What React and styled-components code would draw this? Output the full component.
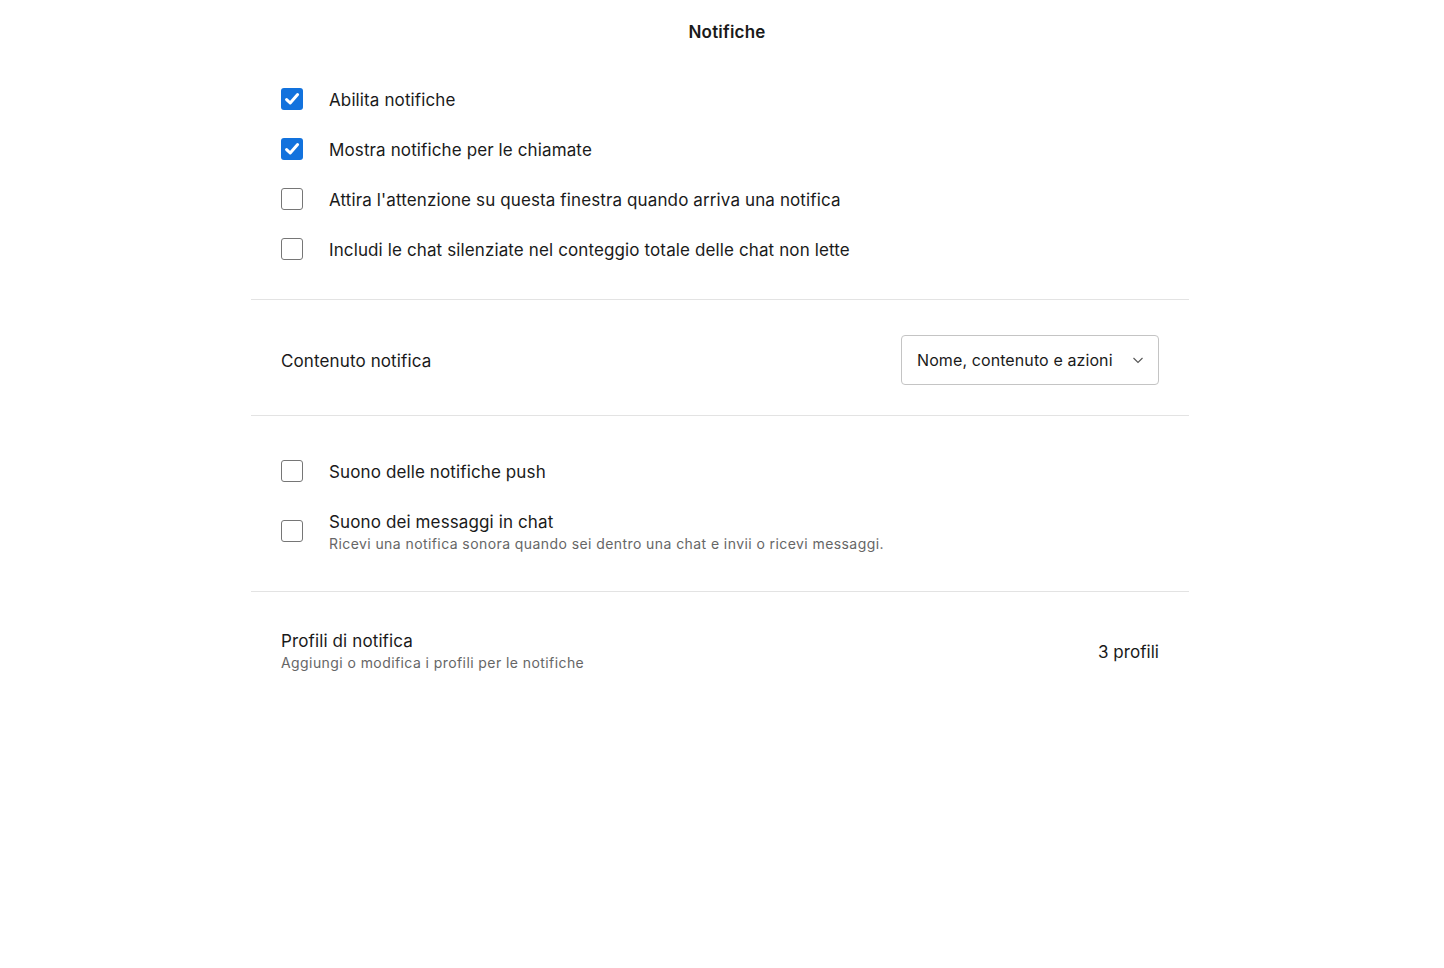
import React from "react";
import styled, { createGlobalStyle } from "styled-components";

const GlobalStyle = createGlobalStyle`
  body {
    margin: 0;
    background: #ffffff;
    font-family: Inter, "Noto Sans", sans-serif;
    color: #1a1a1a;
  }
`;

const Page = styled.div`
  width: 938px;
  margin-left: 251px;
`;

const Header = styled.header`
  height: 49px;
  padding-top: 21px;
  box-sizing: border-box;
  text-align: center;
  margin-left: 10px;
  font-size: 17px;
  font-weight: 600;
  letter-spacing: 0.2px;
  line-height: 22px;
`;

const Section = styled.section`
  padding: ${({ $pad }) => $pad || "25px 30px"};
  border-bottom: ${({ $last }) => ($last ? "none" : "1px solid #e3e3e3")};
`;

const CheckRow = styled.label`
  display: flex;
  align-items: center;
  gap: 26px;
  min-height: ${({ $tall }) => ($tall ? "70px" : "50px")};
  cursor: pointer;
`;

const Box = styled.span`
  flex: none;
  width: 22px;
  height: 22px;
  box-sizing: border-box;
  border-radius: 3px;
  border: ${({ $checked }) => ($checked ? "none" : "1.5px solid #767676")};
  background: ${({ $checked }) => ($checked ? "#1272dd" : "#fff")};
  display: flex;
  align-items: center;
  justify-content: center;
`;

const Texts = styled.div`
  display: flex;
  flex-direction: column;
  gap: 1px;
  padding-top: ${({ $nudge }) => ($nudge ? "2px" : "0")};
`;

const Label = styled.span`
  font-size: 17px;
  line-height: 22px;
  letter-spacing: 0.12px;
  padding-top: ${({ $nudge }) => ($nudge ? "2px" : "0")};
`;

const Sub = styled.span`
  font-size: 14px;
  line-height: 20px;
  letter-spacing: 0.42px;
  color: #666;
`;

const SettingRow = styled.div`
  display: flex;
  align-items: center;
  justify-content: space-between;
  min-height: ${({ $h }) => $h || "50px"};
`;

const Select = styled.button`
  width: 258px;
  height: 50px;
  box-sizing: border-box;
  border: 1px solid #c4c4c4;
  border-radius: 4px;
  background: #fff;
  display: flex;
  align-items: center;
  justify-content: space-between;
  padding: 0 14px 0 15px;
  font-family: inherit;
  font-size: 16px;
  letter-spacing: 0.1px;
  color: #1a1a1a;
`;

const Value = styled.span`
  font-size: 17px;
  line-height: 22px;
  letter-spacing: 0.05px;
  padding-top: 2px;
`;

const Check = ({ checked }) => (
  <Box $checked={checked}>
    {checked && (
      <svg width="18" height="18" viewBox="0 0 18 18" fill="none">
        <path
          d="M3.6 9.6l3.6 3.4L14.6 4.6"
          stroke="#fff"
          strokeWidth="3"
          strokeLinecap="round"
          strokeLinejoin="round"
        />
      </svg>
    )}
  </Box>
);

const Chevron = () => (
  <svg width="12" height="12" viewBox="0 0 12 12" fill="none">
    <path d="M1.5 4l4.5 4.5L10.5 4" stroke="#555" strokeWidth="1.1" />
  </svg>
);

const general = [
  { text: "Abilita notifiche", checked: true },
  { text: "Mostra notifiche per le chiamate", checked: true },
  { text: "Attira l'attenzione su questa finestra quando arriva una notifica", checked: false },
  { text: "Includi le chat silenziate nel conteggio totale delle chat non lette", checked: false },
];

const App = () => {
  return (
    <>
      <GlobalStyle />
      <Header>Notifiche</Header>
      <Page>
        <Section>
          {general.map((item) => (
            <CheckRow key={item.text}>
              <Check checked={item.checked} />
              <Label $nudge>{item.text}</Label>
            </CheckRow>
          ))}
        </Section>
        <Section $pad="35px 30px 30px">
          <SettingRow>
            <Label $nudge>Contenuto notifica</Label>
            <Select>
              Nome, contenuto e azioni
              <Chevron />
            </Select>
          </SettingRow>
        </Section>
        <Section $pad="30px 30px 25px">
          <CheckRow>
            <Check checked={false} />
            <Label $nudge>Suono delle notifiche push</Label>
          </CheckRow>
          <CheckRow $tall>
            <Check checked={false} />
            <Texts $nudge>
              <Label>Suono dei messaggi in chat</Label>
              <Sub>Ricevi una notifica sonora quando sei dentro una chat e invii o ricevi messaggi.</Sub>
            </Texts>
          </CheckRow>
        </Section>
        <Section $last $pad="30px">
          <SettingRow $h="58px">
            <Texts>
              <Label>Profili di notifica</Label>
              <Sub>Aggiungi o modifica i profili per le notifiche</Sub>
            </Texts>
            <Value>3 profili</Value>
          </SettingRow>
        </Section>
      </Page>
    </>
  );
};

export default App;
